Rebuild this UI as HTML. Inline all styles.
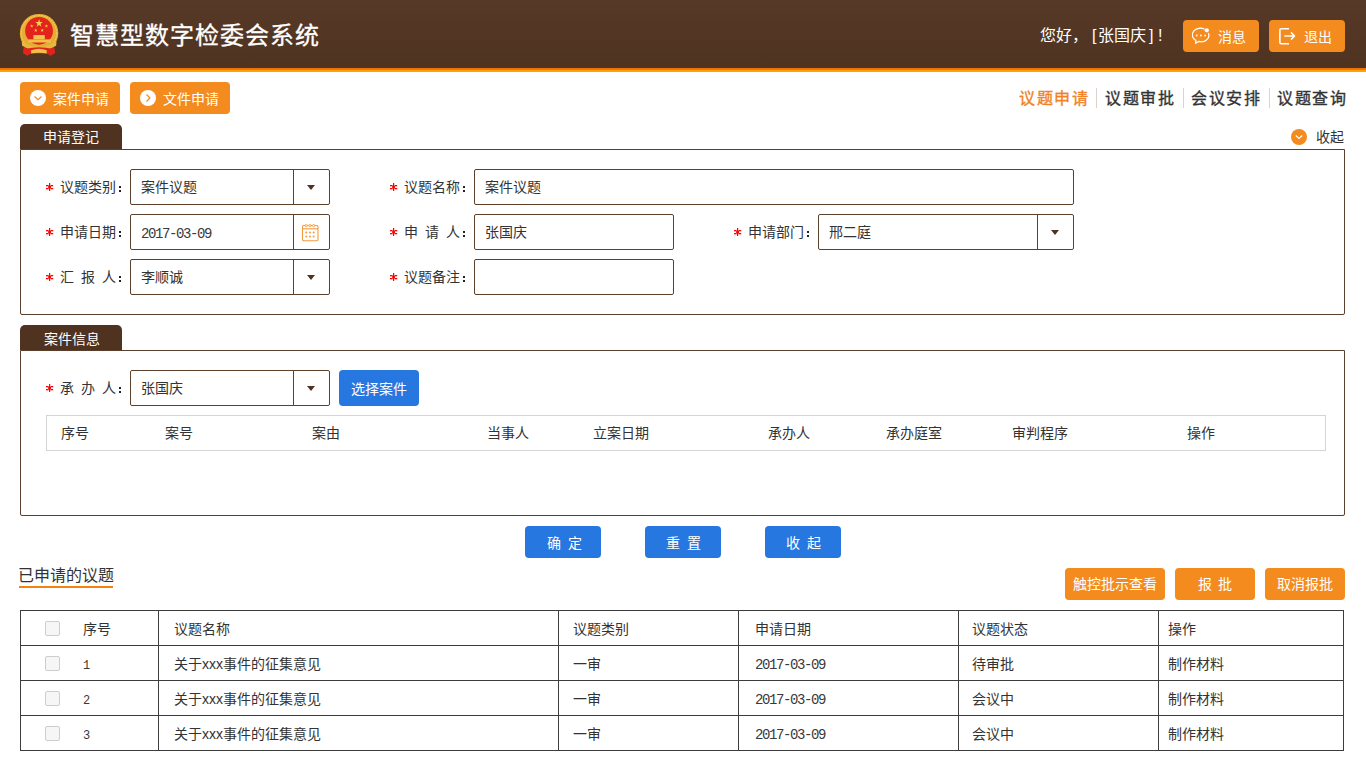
<!DOCTYPE html><html lang="zh-CN"><head><meta charset="utf-8"><style>
*{margin:0;padding:0;box-sizing:border-box}
html,body{width:1366px;height:768px;overflow:hidden;background:#fff}
body{position:relative;font-family:"Liberation Sans",sans-serif;font-size:14px;color:#333}
.a{position:absolute;white-space:nowrap}
.t{line-height:20px}
.obtn{position:absolute;background:#f38b1f;border-radius:4px}
.bbtn{position:absolute;background:#2777e0;border-radius:4px}
.nav{position:absolute;top:88px;font-size:16px;font-weight:500;-webkit-text-stroke:0.35px currentColor;color:#333;letter-spacing:1.5px;line-height:22px;white-space:nowrap}
.sep{position:absolute;top:88px;width:1px;height:20px;background:#dcd2cb}
.tab{position:absolute;background:#4f3220;border-radius:5px 5px 0 0;left:20px;width:102px;height:25px}
.box{position:absolute;left:20px;width:1325px;border:1px solid #5a3f2c;border-radius:0 0 2px 2px}
.inp{position:absolute;border:1px solid #5c402c;border-radius:2px;height:36px;background:#fff}
.dd{position:absolute;top:0;bottom:0;width:1px;background:#5c402c}
.tri{position:absolute;width:0;height:0;border-left:4px solid transparent;border-right:4px solid transparent;border-top:5px solid #4f3220}
.mono{font-family:"Liberation Mono",monospace;font-size:14px;letter-spacing:-1.4px;color:#3a3a3a}
.col{position:absolute;width:2px;height:2px;background:#222;box-shadow:0 4px 0 #222}
.hl{position:absolute;height:1px;background:#3c3c3c}
.vl{position:absolute;width:1px;background:#3c3c3c}
.cb{position:absolute;width:15px;height:15px;border:1px solid #cdcdcd;border-radius:2px;background:#f6f6f6}
</style></head><body>
<div class="a" style="left:0;top:0;width:1366px;height:68px;background:linear-gradient(#563926,#4f3321)"></div>
<div class="a" style="left:0;top:68px;width:1366px;height:2px;background:#f27209"></div>
<div class="a" style="left:0;top:70px;width:1366px;height:2px;background:#ffa408"></div>
<svg class="a" style="left:10px;top:5px" width="60" height="60" viewBox="0 0 768 768">
  <path d="M180 510 L560 510 L580 615 L520 650 L470 620 L270 620 L220 650 L165 615 Z" fill="#e0241c"/>
  <circle cx="372" cy="360" r="246" fill="#e6ad35"/>
  <circle cx="372" cy="360" r="226" fill="none" stroke="#f4cf5a" stroke-width="14" stroke-dasharray="20 14"/>
  <circle cx="372" cy="330" r="178" fill="#e2241d"/>
  <path d="M0 -1 L0.2245 -0.309 L0.951 -0.309 L0.363 0.118 L0.588 0.809 L0 0.382 L-0.588 0.809 L-0.363 0.118 L-0.951 -0.309 L-0.2245 -0.309Z" transform="translate(372 235) scale(52)" fill="#f5d14a"/>
  <path d="M0 -1 L0.2245 -0.309 L0.951 -0.309 L0.363 0.118 L0.588 0.809 L0 0.382 L-0.588 0.809 L-0.363 0.118 L-0.951 -0.309 L-0.2245 -0.309Z" transform="translate(278 270) scale(24)" fill="#f5d14a"/>
  <path d="M0 -1 L0.2245 -0.309 L0.951 -0.309 L0.363 0.118 L0.588 0.809 L0 0.382 L-0.588 0.809 L-0.363 0.118 L-0.951 -0.309 L-0.2245 -0.309Z" transform="translate(330 325) scale(24)" fill="#f5d14a"/>
  <path d="M0 -1 L0.2245 -0.309 L0.951 -0.309 L0.363 0.118 L0.588 0.809 L0 0.382 L-0.588 0.809 L-0.363 0.118 L-0.951 -0.309 L-0.2245 -0.309Z" transform="translate(412 325) scale(24)" fill="#f5d14a"/>
  <path d="M0 -1 L0.2245 -0.309 L0.951 -0.309 L0.363 0.118 L0.588 0.809 L0 0.382 L-0.588 0.809 L-0.363 0.118 L-0.951 -0.309 L-0.2245 -0.309Z" transform="translate(466 270) scale(24)" fill="#f5d14a"/>
  <rect x="300" y="385" width="145" height="55" fill="#f2c54a"/>
  <rect x="235" y="440" width="290" height="40" fill="#f0c048"/>
  <path d="M150 470 Q372 600 595 470 L590 520 Q372 640 155 520Z" fill="#e9b83f"/>
  <path d="M200 560 Q372 520 545 560 L545 620 Q372 580 200 620Z" fill="#e0241c"/>
  <path d="M270 580 Q372 540 470 580 L470 620 Q372 600 270 620Z" fill="#f0c048"/>
</svg>
<div class="a" style="left:70px;top:19px;font-size:24px;font-weight:500;-webkit-text-stroke:0.3px #fff;color:#fff;letter-spacing:1px;line-height:34px">智慧型数字检委会系统</div>
<div class="a" style="left:1040px;top:24px;font-size:16px;color:#fff;line-height:24px">您好，<span style="display:inline-block;width:10px;text-indent:4px">[</span>张国庆<span style="display:inline-block;width:11px;text-indent:3px">]</span><span style="display:inline-block;width:8px;text-indent:1px">!</span></div>
<div class="obtn" style="left:1183px;top:20px;width:76px;height:32px"></div>
<svg class="a" style="left:1190px;top:26px" width="22" height="20" viewBox="0 0 22 20">
  <path d="M14.6 3.3 A7.6 6.5 0 0 0 5.9 14.6 L5.6 17.2 L8.9 15.4 A7.6 6.5 0 0 0 18.4 7" fill="none" stroke="#fff" stroke-width="1.2"/>
  <circle cx="16.8" cy="4.3" r="2.1" fill="#fff"/>
  <circle cx="6.7" cy="9.5" r="0.95" fill="#fff"/><circle cx="10.9" cy="9.5" r="0.95" fill="#fff"/><circle cx="15.1" cy="9.5" r="0.95" fill="#fff"/>
</svg>
<div class="a t" style="left:1218px;top:27px;color:#fff">消息</div>
<div class="obtn" style="left:1269px;top:20px;width:76px;height:32px"></div>
<svg class="a" style="left:1276px;top:26px" width="22" height="20" viewBox="0 0 22 20">
  <path d="M13 2.8 L5.2 2.8 Q3.9 2.8 3.9 4.1 L3.9 16.4 Q3.9 17.7 5.2 17.7 L13 17.7" fill="none" stroke="#fff" stroke-width="1.6"/>
  <path d="M8.3 10 L18 10 M15 6.4 L18.4 10 L15 13.6" fill="none" stroke="#fff" stroke-width="1.6"/>
</svg>
<div class="a t" style="left:1304px;top:27px;color:#fff">退出</div>
<div class="obtn" style="left:20px;top:82px;width:100px;height:32px"></div>
<svg class="a" style="left:30px;top:90px" width="16" height="16" viewBox="0 0 16 16"><circle cx="8" cy="8" r="8" fill="#fff"/><path d="M4.5 6.5 L8 9.8 L11.5 6.5" fill="none" stroke="#f38b1f" stroke-width="1.2"/></svg>
<div class="a t" style="left:53px;top:89px;color:#fff">案件申请</div>
<div class="obtn" style="left:130px;top:82px;width:100px;height:32px"></div>
<svg class="a" style="left:140px;top:90px" width="16" height="16" viewBox="0 0 16 16"><circle cx="8" cy="8" r="8" fill="#fff"/><path d="M6.5 4.5 L9.9 8 L6.5 11.5" fill="none" stroke="#f38b1f" stroke-width="1.2"/></svg>
<div class="a t" style="left:163px;top:89px;color:#fff">文件申请</div>
<div class="nav" style="left:1019px;color:#f08224">议题申请</div>
<div class="sep" style="left:1096px"></div>
<div class="nav" style="left:1105px">议题审批</div>
<div class="sep" style="left:1183px"></div>
<div class="nav" style="left:1191px">会议安排</div>
<div class="sep" style="left:1269px"></div>
<div class="nav" style="left:1277px">议题查询</div>
<div class="tab" style="top:124px"></div><div class="a t" style="left:43px;top:127px;color:#fff">申请登记</div>
<svg class="a" style="left:1291px;top:129px" width="16" height="16" viewBox="0 0 16 16"><circle cx="8" cy="8" r="8" fill="#f38b1f"/><path d="M4.8 6.5 L8 9.5 L11.2 6.5" fill="none" stroke="#fff" stroke-width="1.2"/></svg>
<div class="a t" style="left:1316px;top:127px">收起</div>
<div class="box" style="top:149px;height:166px"></div>
<svg class="a" style="left:46px;top:183px" width="8" height="9" viewBox="0 0 8 9"><g fill="#f00"><rect x="3" y="0" width="1.2" height="8"/><rect x="0" y="2" width="2.6" height="1.3"/><rect x="4.6" y="2" width="2.6" height="1.3"/><rect x="0" y="5" width="2.6" height="1.3"/><rect x="4.6" y="5" width="2.6" height="1.3"/><circle cx="3.6" cy="4" r="1.6"/></g></svg>
<div class="a t" style="left:60px;top:177px">议题类别</div>
<div class="col" style="left:119px;top:186px"></div>
<div class="inp" style="left:130px;top:169px;width:200px"><span class="a t" style="left:10px;top:7px">案件议题</span><i class="dd" style="left:162px"></i><i class="tri" style="left:176px;top:15px"></i></div>
<svg class="a" style="left:390px;top:183px" width="8" height="9" viewBox="0 0 8 9"><g fill="#f00"><rect x="3" y="0" width="1.2" height="8"/><rect x="0" y="2" width="2.6" height="1.3"/><rect x="4.6" y="2" width="2.6" height="1.3"/><rect x="0" y="5" width="2.6" height="1.3"/><rect x="4.6" y="5" width="2.6" height="1.3"/><circle cx="3.6" cy="4" r="1.6"/></g></svg>
<div class="a t" style="left:404px;top:177px">议题名称</div>
<div class="col" style="left:463px;top:186px"></div>
<div class="inp" style="left:474px;top:169px;width:600px"><span class="a t" style="left:10px;top:7px">案件议题</span></div>
<svg class="a" style="left:46px;top:228px" width="8" height="9" viewBox="0 0 8 9"><g fill="#f00"><rect x="3" y="0" width="1.2" height="8"/><rect x="0" y="2" width="2.6" height="1.3"/><rect x="4.6" y="2" width="2.6" height="1.3"/><rect x="0" y="5" width="2.6" height="1.3"/><rect x="4.6" y="5" width="2.6" height="1.3"/><circle cx="3.6" cy="4" r="1.6"/></g></svg>
<div class="a t" style="left:60px;top:222px">申请日期</div>
<div class="col" style="left:119px;top:231px"></div>
<div class="inp" style="left:130px;top:214px;width:200px"><span class="a mono" style="left:10px;top:9px;line-height:20px">2017-03-09</span><i class="dd" style="left:162px"></i><svg style="position:absolute;left:170px;top:9px" width="18" height="18" viewBox="0 0 18 18">
<rect x="1.5" y="1.5" width="15.5" height="15.3" rx="1.2" fill="none" stroke="#f39a3c" stroke-width="1.1"/>
<line x1="1.5" y1="4.8" x2="17" y2="4.8" stroke="#f39a3c" stroke-width="1.1"/>
<g fill="#fff" stroke="#f39a3c" stroke-width="0.9"><circle cx="5.3" cy="1.6" r="1.1"/><circle cx="9" cy="1.6" r="1.1"/><circle cx="12.6" cy="1.6" r="1.1"/></g>
<g fill="#f39a3c"><circle cx="5.3" cy="8.6" r="1"/><circle cx="9" cy="8.6" r="1"/><circle cx="12.6" cy="8.6" r="1"/><circle cx="5.3" cy="12.5" r="1"/><circle cx="9" cy="12.5" r="1"/><circle cx="12.6" cy="12.5" r="1"/></g>
</svg></div>
<svg class="a" style="left:390px;top:228px" width="8" height="9" viewBox="0 0 8 9"><g fill="#f00"><rect x="3" y="0" width="1.2" height="8"/><rect x="0" y="2" width="2.6" height="1.3"/><rect x="4.6" y="2" width="2.6" height="1.3"/><rect x="0" y="5" width="2.6" height="1.3"/><rect x="4.6" y="5" width="2.6" height="1.3"/><circle cx="3.6" cy="4" r="1.6"/></g></svg>
<div class="a t" style="left:404px;top:222px">申</div>
<div class="a t" style="left:425px;top:222px">请</div>
<div class="a t" style="left:446px;top:222px">人</div>
<div class="col" style="left:463px;top:231px"></div>
<div class="inp" style="left:474px;top:214px;width:200px"><span class="a t" style="left:10px;top:7px">张国庆</span></div>
<svg class="a" style="left:734px;top:228px" width="8" height="9" viewBox="0 0 8 9"><g fill="#f00"><rect x="3" y="0" width="1.2" height="8"/><rect x="0" y="2" width="2.6" height="1.3"/><rect x="4.6" y="2" width="2.6" height="1.3"/><rect x="0" y="5" width="2.6" height="1.3"/><rect x="4.6" y="5" width="2.6" height="1.3"/><circle cx="3.6" cy="4" r="1.6"/></g></svg>
<div class="a t" style="left:748px;top:222px">申请部门</div>
<div class="col" style="left:807px;top:231px"></div>
<div class="inp" style="left:818px;top:214px;width:256px"><span class="a t" style="left:10px;top:7px">邢二庭</span><i class="dd" style="left:218px"></i><i class="tri" style="left:232px;top:15px"></i></div>
<svg class="a" style="left:46px;top:273px" width="8" height="9" viewBox="0 0 8 9"><g fill="#f00"><rect x="3" y="0" width="1.2" height="8"/><rect x="0" y="2" width="2.6" height="1.3"/><rect x="4.6" y="2" width="2.6" height="1.3"/><rect x="0" y="5" width="2.6" height="1.3"/><rect x="4.6" y="5" width="2.6" height="1.3"/><circle cx="3.6" cy="4" r="1.6"/></g></svg>
<div class="a t" style="left:60px;top:267px">汇</div>
<div class="a t" style="left:81px;top:267px">报</div>
<div class="a t" style="left:102px;top:267px">人</div>
<div class="col" style="left:119px;top:276px"></div>
<div class="inp" style="left:130px;top:259px;width:200px"><span class="a t" style="left:10px;top:7px">李顺诚</span><i class="dd" style="left:162px"></i><i class="tri" style="left:176px;top:15px"></i></div>
<svg class="a" style="left:390px;top:273px" width="8" height="9" viewBox="0 0 8 9"><g fill="#f00"><rect x="3" y="0" width="1.2" height="8"/><rect x="0" y="2" width="2.6" height="1.3"/><rect x="4.6" y="2" width="2.6" height="1.3"/><rect x="0" y="5" width="2.6" height="1.3"/><rect x="4.6" y="5" width="2.6" height="1.3"/><circle cx="3.6" cy="4" r="1.6"/></g></svg>
<div class="a t" style="left:404px;top:267px">议题备注</div>
<div class="col" style="left:463px;top:276px"></div>
<div class="inp" style="left:474px;top:259px;width:200px"></div>
<div class="tab" style="top:325px"></div><div class="a t" style="left:44px;top:329px;color:#fff">案件信息</div>
<div class="box" style="top:350px;height:166px"></div>
<svg class="a" style="left:46px;top:384px" width="8" height="9" viewBox="0 0 8 9"><g fill="#f00"><rect x="3" y="0" width="1.2" height="8"/><rect x="0" y="2" width="2.6" height="1.3"/><rect x="4.6" y="2" width="2.6" height="1.3"/><rect x="0" y="5" width="2.6" height="1.3"/><rect x="4.6" y="5" width="2.6" height="1.3"/><circle cx="3.6" cy="4" r="1.6"/></g></svg>
<div class="a t" style="left:60px;top:378px">承</div>
<div class="a t" style="left:81px;top:378px">办</div>
<div class="a t" style="left:102px;top:378px">人</div>
<div class="col" style="left:119px;top:387px"></div>
<div class="inp" style="left:130px;top:370px;width:200px"><span class="a t" style="left:10px;top:7px">张国庆</span><i class="dd" style="left:162px"></i><i class="tri" style="left:176px;top:15px"></i></div>
<div class="bbtn" style="left:339px;top:370px;width:80px;height:36px"></div><div class="a t" style="left:351px;top:379px;color:#fff">选择案件</div>
<div class="a" style="left:46px;top:415px;width:1280px;height:36px;border:1px solid #d4d4d4"></div>
<div class="a t" style="left:61px;top:423px">序号</div>
<div class="a t" style="left:165px;top:423px">案号</div>
<div class="a t" style="left:312px;top:423px">案由</div>
<div class="a t" style="left:487px;top:423px">当事人</div>
<div class="a t" style="left:593px;top:423px">立案日期</div>
<div class="a t" style="left:768px;top:423px">承办人</div>
<div class="a t" style="left:886px;top:423px">承办庭室</div>
<div class="a t" style="left:1012px;top:423px">审判程序</div>
<div class="a t" style="left:1187px;top:423px">操作</div>
<div class="bbtn" style="left:525px;top:526px;width:76px;height:32px"></div><div class="a t" style="left:547px;top:533px;color:#fff;letter-spacing:7px">确定</div>
<div class="bbtn" style="left:645px;top:526px;width:76px;height:32px"></div><div class="a t" style="left:666px;top:533px;color:#fff;letter-spacing:7px">重置</div>
<div class="bbtn" style="left:765px;top:526px;width:76px;height:32px"></div><div class="a t" style="left:786px;top:533px;color:#fff;letter-spacing:7px">收起</div>
<div class="a" style="left:18px;top:565px;font-size:16px;line-height:22px">已申请的议题</div>
<div class="a" style="left:19px;top:586px;width:94px;height:2px;background:#f5820f"></div>
<div class="obtn" style="left:1065px;top:568px;width:100px;height:32px"></div><div class="a t" style="left:1073px;top:574px;color:#fff">触控批示查看</div>
<div class="obtn" style="left:1175px;top:568px;width:80px;height:32px"></div><div class="a t" style="left:1198px;top:574px;color:#fff;letter-spacing:6px">报批</div>
<div class="obtn" style="left:1265px;top:568px;width:80px;height:32px"></div><div class="a t" style="left:1277px;top:574px;color:#fff">取消报批</div>
<div class="hl" style="left:20px;top:610px;width:1324px"></div>
<div class="hl" style="left:20px;top:645px;width:1324px"></div>
<div class="hl" style="left:20px;top:680px;width:1324px"></div>
<div class="hl" style="left:20px;top:715px;width:1324px"></div>
<div class="hl" style="left:20px;top:750px;width:1324px"></div>
<div class="vl" style="left:20px;top:610px;height:141px"></div>
<div class="vl" style="left:158px;top:610px;height:141px"></div>
<div class="vl" style="left:558px;top:610px;height:141px"></div>
<div class="vl" style="left:738px;top:610px;height:141px"></div>
<div class="vl" style="left:958px;top:610px;height:141px"></div>
<div class="vl" style="left:1158px;top:610px;height:141px"></div>
<div class="vl" style="left:1343px;top:610px;height:141px"></div>
<div class="cb" style="left:45px;top:621px"></div>
<div class="a t" style="left:83px;top:619px">序号</div>
<div class="a t" style="left:174px;top:619px">议题名称</div>
<div class="a t" style="left:573px;top:619px">议题类别</div>
<div class="a t" style="left:755px;top:619px">申请日期</div>
<div class="a t" style="left:972px;top:619px">议题状态</div>
<div class="a t" style="left:1168px;top:619px">操作</div>
<div class="cb" style="left:45px;top:656px"></div>
<div class="a mono" style="left:83px;top:656px;line-height:20px;font-size:12px;letter-spacing:0">1</div>
<div class="a t" style="left:174px;top:654px">关于xxx事件的征集意见</div>
<div class="a t" style="left:573px;top:654px">一审</div>
<div class="a mono" style="left:755px;top:655px;line-height:20px">2017-03-09</div>
<div class="a t" style="left:972px;top:654px">待审批</div>
<div class="a t" style="left:1168px;top:654px">制作材料</div>
<div class="cb" style="left:45px;top:691px"></div>
<div class="a mono" style="left:83px;top:691px;line-height:20px;font-size:12px;letter-spacing:0">2</div>
<div class="a t" style="left:174px;top:689px">关于xxx事件的征集意见</div>
<div class="a t" style="left:573px;top:689px">一审</div>
<div class="a mono" style="left:755px;top:690px;line-height:20px">2017-03-09</div>
<div class="a t" style="left:972px;top:689px">会议中</div>
<div class="a t" style="left:1168px;top:689px">制作材料</div>
<div class="cb" style="left:45px;top:726px"></div>
<div class="a mono" style="left:83px;top:726px;line-height:20px;font-size:12px;letter-spacing:0">3</div>
<div class="a t" style="left:174px;top:724px">关于xxx事件的征集意见</div>
<div class="a t" style="left:573px;top:724px">一审</div>
<div class="a mono" style="left:755px;top:725px;line-height:20px">2017-03-09</div>
<div class="a t" style="left:972px;top:724px">会议中</div>
<div class="a t" style="left:1168px;top:724px">制作材料</div>
</body></html>
